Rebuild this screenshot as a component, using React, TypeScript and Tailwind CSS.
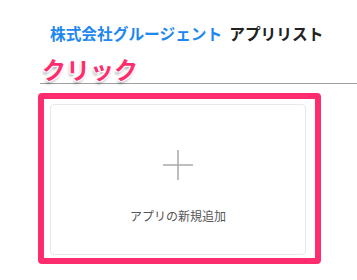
export default function App() {
  return (
    <div className="w-[357px] h-[280px] bg-white overflow-hidden font-['Noto_Sans_CJK_JP','Noto_Sans',sans-serif]">
      {/* Header */}
      <div className="pt-[20px] pl-[50px] h-[48px] flex items-center gap-[7px] text-[15.7px] font-bold leading-[24px]">
        <span className="text-[#1e88f0]">株式会社グルージェント</span>
        <span className="text-[#222]">アプリリスト</span>
      </div>

      {/* Annotation label */}
      <div className="ml-[40px] h-[36px] border-b border-[#a0a0a0] flex items-end">
        <span className="ml-[2px] mb-[-1px] text-[24px] font-bold leading-[30px] text-[#ff2d6e] [text-shadow:1px_1px_0_#fff,-1px_-1px_0_#fff,1px_-1px_0_#fff,-1px_1px_0_#fff,-1px_3px_3px_rgba(0,0,0,0.35)]">
          クリック
        </span>
      </div>

      {/* Highlighted add card */}
      <div className="mt-[9px] ml-[38px] w-[283px] h-[171px] border-[6px] border-[#ff2d6e] rounded-[4px] pl-[6px] pt-[5px] pr-[9px] pb-[3px]">
        <div className="w-full h-full border border-[#e8e8e8] rounded-[4px] flex flex-col items-center">
          <svg className="mt-[45px] w-[30px] h-[30px]" viewBox="0 0 30 30" fill="none" stroke="#a8a8a8" strokeWidth="1.5">
            <line x1="0" y1="15" x2="30" y2="15" />
            <line x1="15" y1="0" x2="15" y2="30" />
          </svg>
          <span className="mt-[28px] text-[12px] leading-[16px] text-[#555]">アプリの新規追加</span>
        </div>
      </div>
    </div>
  );
}
